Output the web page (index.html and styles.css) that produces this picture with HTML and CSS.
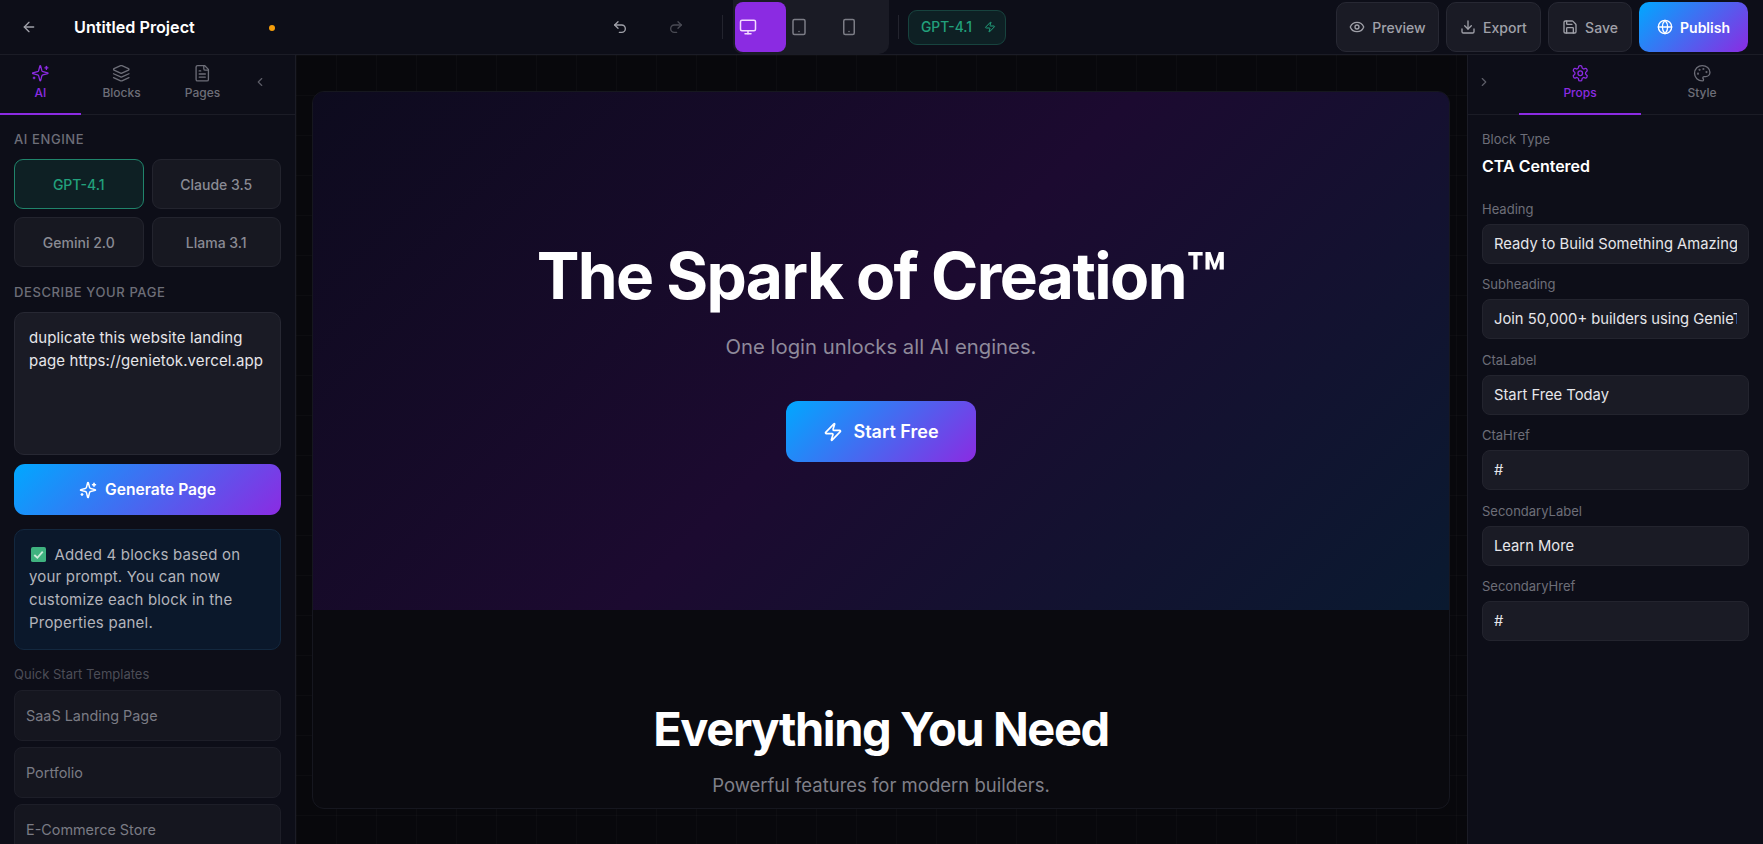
FILE: index.html
```html
<!DOCTYPE html>
<html lang="en">
<head>
    <meta charset="UTF-8">
    <title>Untitled Project</title>
    <link rel="stylesheet" href="styles.css">
</head>
<body>
    <!-- Top bar -->
    <header class="topbar">
        <div class="topbar-left">
            <button class="back-btn">
                <svg class="icon" viewBox="0 0 24 24"><path d="m12 19-7-7 7-7"/><path d="M19 12H5"/></svg>
            </button>
            <span class="project-name">Untitled Project</span>
            <span class="unsaved-dot"></span>
        </div>
        <div class="topbar-center">
            <button class="history-btn">
                <svg class="icon" viewBox="0 0 24 24"><path d="M9 14 4 9l5-5"/><path d="M4 9h10.5a5.5 5.5 0 0 1 5.5 5.5a5.5 5.5 0 0 1-5.5 5.5H11"/></svg>
            </button>
            <button class="history-btn disabled">
                <svg class="icon" viewBox="0 0 24 24"><path d="m15 14 5-5-5-5"/><path d="M20 9H9.5A5.5 5.5 0 0 0 4 14.5A5.5 5.5 0 0 0 9.5 20H13"/></svg>
            </button>
            <span class="divider"></span>
            <div class="device-group">
                <button class="device-btn active">
                    <svg class="icon" viewBox="0 0 24 24"><rect x="2" y="3" width="20" height="14" rx="2"/><path d="M8 21h8"/><path d="M12 17v4"/></svg>
                </button>
                <button class="device-btn">
                    <svg class="icon" viewBox="0 0 24 24"><rect x="4" y="2" width="16" height="20" rx="2"/><path d="M12 18h.01"/></svg>
                </button>
                <button class="device-btn">
                    <svg class="icon" viewBox="0 0 24 24"><rect x="5" y="2" width="14" height="20" rx="2"/><path d="M12 18h.01"/></svg>
                </button>
            </div>
            <span class="divider"></span>
            <div class="engine-chip">
                <span>GPT-4.1</span>
                <svg class="icon icon-sm" viewBox="0 0 24 24"><path d="M4 14a1 1 0 0 1-.78-1.63l9.9-10.2a.5.5 0 0 1 .86.46l-1.92 6.02A1 1 0 0 0 13 10h7a1 1 0 0 1 .78 1.63l-9.9 10.2a.5.5 0 0 1-.86-.46l1.92-6.02A1 1 0 0 0 11 14z"/></svg>
            </div>
        </div>
        <div class="topbar-right">
            <button class="action-btn preview-btn">
                <svg class="icon" viewBox="0 0 24 24"><path d="M2.062 12.348a1 1 0 0 1 0-.696 10.75 10.75 0 0 1 19.876 0 1 1 0 0 1 0 .696 10.75 10.75 0 0 1-19.876 0"/><circle cx="12" cy="12" r="3"/></svg>
                Preview
            </button>
            <button class="action-btn export-btn">
                <svg class="icon" viewBox="0 0 24 24"><path d="M21 15v4a2 2 0 0 1-2 2H5a2 2 0 0 1-2-2v-4"/><path d="m7 10 5 5 5-5"/><path d="M12 15V3"/></svg>
                Export
            </button>
            <button class="action-btn save-btn">
                <svg class="icon" viewBox="0 0 24 24"><path d="M15.2 3a2 2 0 0 1 1.4.6l3.8 3.8a2 2 0 0 1 .6 1.4V19a2 2 0 0 1-2 2H5a2 2 0 0 1-2-2V5a2 2 0 0 1 2-2z"/><path d="M17 21v-7a1 1 0 0 0-1-1H8a1 1 0 0 0-1 1v7"/><path d="M7 3v4a1 1 0 0 0 1 1h7"/></svg>
                Save
            </button>
            <button class="action-btn publish-btn">
                <svg class="icon" viewBox="0 0 24 24"><circle cx="12" cy="12" r="10"/><path d="M12 2a14.5 14.5 0 0 0 0 20 14.5 14.5 0 0 0 0-20"/><path d="M2 12h20"/></svg>
                Publish
            </button>
        </div>
    </header>

    <div class="workspace">
        <!-- Left panel -->
        <aside class="panel panel-left">
            <div class="tabs">
                <div class="tab active">
                    <svg class="icon tab-icon" viewBox="0 0 24 24"><path d="M9.937 15.5A2 2 0 0 0 8.5 14.063l-6.135-1.582a.5.5 0 0 1 0-.962L8.5 9.936A2 2 0 0 0 9.937 8.5l1.582-6.135a.5.5 0 0 1 .963 0L14.063 8.5A2 2 0 0 0 15.5 9.937l6.135 1.581a.5.5 0 0 1 0 .964L15.5 14.063a2 2 0 0 0-1.437 1.437l-1.582 6.135a.5.5 0 0 1-.963 0z"/><path d="M20 3v4"/><path d="M22 5h-4"/><path d="M4 17v2"/><path d="M5 18H3"/></svg>
                    <span>AI</span>
                </div>
                <div class="tab">
                    <svg class="icon tab-icon" viewBox="0 0 24 24"><path d="m12.83 2.18a2 2 0 0 0-1.66 0L2.6 6.08a1 1 0 0 0 0 1.83l8.58 3.91a2 2 0 0 0 1.66 0l8.58-3.9a1 1 0 0 0 0-1.83Z"/><path d="m22 17.65-9.17 4.16a2 2 0 0 1-1.66 0L2 17.65"/><path d="m22 12.65-9.17 4.16a2 2 0 0 1-1.66 0L2 12.65"/></svg>
                    <span>Blocks</span>
                </div>
                <div class="tab">
                    <svg class="icon tab-icon" viewBox="0 0 24 24"><path d="M15 2H6a2 2 0 0 0-2 2v16a2 2 0 0 0 2 2h12a2 2 0 0 0 2-2V7Z"/><path d="M14 2v4a2 2 0 0 0 2 2h4"/><path d="M10 9H8"/><path d="M16 13H8"/><path d="M16 17H8"/></svg>
                    <span>Pages</span>
                </div>
                <div class="collapse-btn collapse-left">
                    <svg class="icon icon-sm" viewBox="0 0 24 24"><path d="m15 18-6-6 6-6"/></svg>
                </div>
            </div>

            <div class="panel-body">
                <div class="section-label">AI ENGINE</div>
                <div class="engine-grid">
                    <button class="engine-btn active">GPT-4.1</button>
                    <button class="engine-btn">Claude 3.5</button>
                    <button class="engine-btn">Gemini 2.0</button>
                    <button class="engine-btn">Llama 3.1</button>
                </div>

                <div class="section-label describe-label">DESCRIBE YOUR PAGE</div>
                <textarea class="prompt-box">duplicate this website landing page https://genietok.vercel.app</textarea>

                <button class="generate-btn">
                    <svg class="icon" viewBox="0 0 24 24"><path d="M9.937 15.5A2 2 0 0 0 8.5 14.063l-6.135-1.582a.5.5 0 0 1 0-.962L8.5 9.936A2 2 0 0 0 9.937 8.5l1.582-6.135a.5.5 0 0 1 .963 0L14.063 8.5A2 2 0 0 0 15.5 9.937l6.135 1.581a.5.5 0 0 1 0 .964L15.5 14.063a2 2 0 0 0-1.437 1.437l-1.582 6.135a.5.5 0 0 1-.963 0z"/><path d="M20 3v4"/><path d="M22 5h-4"/><path d="M4 17v2"/><path d="M5 18H3"/></svg>
                    Generate Page
                </button>

                <div class="ai-message">
                    <svg class="check-mark" viewBox="0 0 16 16"><rect width="16" height="16" rx="2"/><path d="M3.5 8.5 6.8 11.5 12.5 5"/></svg>
                    Added 4 blocks based on your prompt. You can now customize each block in the Properties panel.
                </div>

                <div class="templates-label">Quick Start Templates</div>
                <div class="template-list">
                    <div class="template">SaaS Landing Page</div>
                    <div class="template">Portfolio</div>
                    <div class="template">E-Commerce Store</div>
                </div>
            </div>
        </aside>

        <!-- Canvas -->
        <main class="canvas">
            <div class="page-frame">
                <section class="hero">
                    <h1>The Spark of Creation™</h1>
                    <p>One login unlocks all AI engines.</p>
                    <button class="hero-btn">
                        <svg class="icon" viewBox="0 0 24 24"><path d="M4 14a1 1 0 0 1-.78-1.63l9.9-10.2a.5.5 0 0 1 .86.46l-1.92 6.02A1 1 0 0 0 13 10h7a1 1 0 0 1 .78 1.63l-9.9 10.2a.5.5 0 0 1-.86-.46l1.92-6.02A1 1 0 0 0 11 14z"/></svg>
                        Start Free
                    </button>
                </section>
                <section class="features">
                    <h2>Everything You Need</h2>
                    <p>Powerful features for modern builders.</p>
                </section>
            </div>
        </main>

        <!-- Right panel -->
        <aside class="panel panel-right">
            <div class="tabs">
                <div class="collapse-btn collapse-right">
                    <svg class="icon icon-sm" viewBox="0 0 24 24"><path d="m9 18 6-6-6-6"/></svg>
                </div>
                <div class="tab active">
                    <svg class="icon tab-icon" viewBox="0 0 24 24"><path d="M12.22 2h-.44a2 2 0 0 0-2 2v.18a2 2 0 0 1-1 1.73l-.43.25a2 2 0 0 1-2 0l-.15-.08a2 2 0 0 0-2.73.73l-.22.38a2 2 0 0 0 .73 2.73l.15.1a2 2 0 0 1 1 1.72v.51a2 2 0 0 1-1 1.74l-.15.09a2 2 0 0 0-.73 2.73l.22.38a2 2 0 0 0 2.73.73l.15-.08a2 2 0 0 1 2 0l.43.25a2 2 0 0 1 1 1.73V20a2 2 0 0 0 2 2h.44a2 2 0 0 0 2-2v-.18a2 2 0 0 1 1-1.73l.43-.25a2 2 0 0 1 2 0l.15.08a2 2 0 0 0 2.73-.73l.22-.39a2 2 0 0 0-.73-2.73l-.15-.08a2 2 0 0 1-1-1.74v-.5a2 2 0 0 1 1-1.74l.15-.09a2 2 0 0 0 .73-2.73l-.22-.38a2 2 0 0 0-2.73-.73l-.15.08a2 2 0 0 1-2 0l-.43-.25a2 2 0 0 1-1-1.73V4a2 2 0 0 0-2-2z"/><circle cx="12" cy="12" r="3"/></svg>
                    <span>Props</span>
                </div>
                <div class="tab">
                    <svg class="icon tab-icon" viewBox="0 0 24 24"><path d="M12 2C6.5 2 2 6.5 2 12s4.5 10 10 10c.926 0 1.648-.746 1.648-1.688 0-.437-.18-.835-.437-1.125-.29-.289-.438-.652-.438-1.125a1.64 1.64 0 0 1 1.668-1.668h1.996c3.051 0 5.555-2.503 5.555-5.554C21.965 6.012 17.461 2 12 2z"/><circle cx="13.5" cy="6.5" r=".5"/><circle cx="17.5" cy="10.5" r=".5"/><circle cx="8.5" cy="7.5" r=".5"/><circle cx="6.5" cy="12.5" r=".5"/></svg>
                    <span>Style</span>
                </div>
            </div>

            <div class="panel-body">
                <div class="field-label">Block Type</div>
                <div class="block-type">CTA Centered</div>

                <div class="field">
                    <label class="field-label">Heading</label>
                    <input class="field-input" value="Ready to Build Something Amazing?">
                </div>
                <div class="field">
                    <label class="field-label">Subheading</label>
                    <input class="field-input" value="Join 50,000+ builders using GenieTok">
                </div>
                <div class="field">
                    <label class="field-label">CtaLabel</label>
                    <input class="field-input" value="Start Free Today">
                </div>
                <div class="field">
                    <label class="field-label">CtaHref</label>
                    <input class="field-input" value="#">
                </div>
                <div class="field">
                    <label class="field-label">SecondaryLabel</label>
                    <input class="field-input" value="Learn More">
                </div>
                <div class="field">
                    <label class="field-label">SecondaryHref</label>
                    <input class="field-input" value="#">
                </div>
            </div>
        </aside>
    </div>
</body>
</html>
```

FILE: styles.css
```css
* {
    box-sizing: border-box;
}

body {
    margin: 0;
    height: 100vh;
    overflow: hidden;
    display: flex;
    flex-direction: column;
    font-family: 'Inter', 'Liberation Sans', sans-serif;
    background: #08080c;
    color: #fff;
}

button {
    font-family: inherit;
    border: none;
    background: none;
    color: inherit;
    padding: 0;
}

.icon {
    width: 16px;
    height: 16px;
    flex-shrink: 0;
    fill: none;
    stroke: currentColor;
    stroke-width: 2;
    stroke-linecap: round;
    stroke-linejoin: round;
}

.icon-sm {
    width: 14px;
    height: 14px;
}

/* Top bar */
.topbar {
    height: 55px;
    flex-shrink: 0;
    display: flex;
    align-items: center;
    background: #0d0e18;
    border-bottom: 1px solid #1b1c26;
    padding-right: 15px;
}

.topbar-left {
    width: 592px;
    display: flex;
    align-items: center;
    padding-left: 21px;
}

.back-btn {
    display: flex;
    color: #a0a1a9;
}

.project-name {
    margin-left: 37px;
    font-size: 16.2px;
    font-weight: 600;
}

.unsaved-dot {
    width: 6px;
    height: 6px;
    margin-left: 74px;
    margin-top: 2px;
    border-radius: 50%;
    background: #f59e0b;
}

.topbar-center {
    display: flex;
    align-items: center;
    height: 54px;
}

.history-btn {
    width: 56px;
    height: 36px;
    display: flex;
    align-items: center;
    justify-content: center;
    color: #a0a1a9;
}

.history-btn.disabled {
    color: #4a4b54;
}

.divider {
    width: 1px;
    height: 24px;
    background: #23242e;
    margin: 0 10px 0 18px;
}

.device-group {
    width: 156px;
    height: 54px;
    display: flex;
    align-items: center;
    padding-left: 2px;
    background: #1a1b25;
    border-radius: 0 0 10px 10px;
}

.device-group + .divider {
    margin: 0 9px;
}

.device-btn {
    width: 50.5px;
    height: 50px;
    display: flex;
    align-items: center;
    padding-left: 4px;
    border-radius: 8px;
    color: #7c7d86;
}

.device-btn .icon {
    width: 18px;
    height: 18px;
}

.device-btn.active {
    background: #8b2be2;
    color: #f3dcff;
}

.engine-chip {
    width: 98px;
    height: 35px;
    display: flex;
    align-items: center;
    gap: 12px;
    padding-left: 12px;
    border: 1px solid #17433e;
    border-radius: 9px;
    background: #0e2024;
    color: #22a07c;
    font-size: 13.8px;
    font-weight: 500;
}

.engine-chip .icon {
    width: 12px;
    height: 12px;
}

.topbar-right {
    margin-left: auto;
    display: flex;
    align-items: center;
    gap: 7px;
}

.action-btn {
    height: 50px;
    display: flex;
    align-items: center;
    justify-content: center;
    gap: 7px;
    border: 1px solid #272833;
    border-radius: 10px;
    background: #1a1b25;
    color: #a0a1a9;
    font-size: 14px;
    font-weight: 500;
}

.preview-btn {
    width: 103px;
}

.export-btn {
    width: 95px;
}

.save-btn {
    width: 84px;
}

.publish-btn {
    width: 109px;
    border: none;
    color: #fff;
    font-weight: 600;
    background: linear-gradient(135deg, #00a8ff, #8b2be2);
}

/* Layout */
.workspace {
    flex: 1;
    min-height: 0;
    display: flex;
}

.panel {
    width: 296px;
    flex-shrink: 0;
    overflow: hidden;
    background: #0d0e18;
}

.panel-left {
    border-right: 1px solid #1b1c26;
}

.panel-right {
    border-left: 1px solid #1b1c26;
}

.tabs {
    height: 60px;
    display: flex;
    border-bottom: 1px solid #1b1c26;
}

.tab {
    width: 81px;
    display: flex;
    flex-direction: column;
    align-items: center;
    padding-top: 9px;
    gap: 2.5px;
    font-size: 12px;
    font-weight: 500;
    color: #6d6e78;
    border-bottom: 2px solid transparent;
    margin-bottom: -1px;
}

.tab.active {
    color: #8b2be2;
    border-bottom-color: #8b2be2;
}

.tab-icon {
    width: 18.5px;
    height: 18.5px;
    stroke-width: 1.7;
}

.panel-right .tab {
    width: 122px;
}

.collapse-btn {
    display: flex;
    align-items: center;
    color: #5c5d67;
    padding-bottom: 6px;
}

.collapse-left {
    padding-left: 10px;
}

.collapse-right {
    width: 51px;
    padding-left: 9px;
}

.panel-body {
    padding: 14px 14px 0;
}

.section-label {
    font-size: 13px;
    font-weight: 500;
    line-height: 20px;
    letter-spacing: 0.6px;
    color: #6d6e78;
}

.engine-grid {
    display: grid;
    grid-template-columns: repeat(2, 1fr);
    gap: 8px;
    margin-top: 10px;
}

.engine-btn {
    height: 50px;
    border: 1px solid #23242e;
    border-radius: 9px;
    background: #171821;
    color: #8a8b94;
    font-size: 14px;
    font-weight: 500;
}

.engine-btn.active {
    border-color: #20846b;
    background: #0e2024;
    color: #22a07c;
}

.describe-label {
    margin-top: 15px;
}

.prompt-box {
    display: block;
    width: 100%;
    height: 143px;
    margin-top: 10px;
    padding: 14px;
    resize: none;
    outline: none;
    border: 1px solid #272833;
    border-radius: 10px;
    background: #1a1b25;
    color: #e6e6ea;
    font-family: inherit;
    font-size: 15px;
    letter-spacing: 0.12px;
    line-height: 22.5px;
}

.generate-btn {
    width: 100%;
    height: 51px;
    margin-top: 9px;
    display: flex;
    align-items: center;
    justify-content: center;
    gap: 8px;
    border-radius: 11px;
    background: linear-gradient(135deg, #00a8ff, #8b2be2);
    font-size: 15.6px;
    font-weight: 600;
}

.generate-btn .icon {
    width: 18px;
    height: 18px;
}

.ai-message {
    height: 121px;
    margin-top: 13.5px;
    padding: 14px;
    border: 1px solid #13283f;
    border-radius: 10px;
    background: #0b182b;
    color: #b3b4bb;
    font-size: 15px;
    letter-spacing: 0.2px;
    line-height: 22.7px;
}

.check-mark {
    width: 15px;
    height: 15px;
    margin: 0 4px 0 2px;
    vertical-align: -2px;
}

.check-mark rect {
    fill: #3fb27f;
}

.check-mark path {
    fill: none;
    stroke: #cdebd9;
    stroke-width: 2;
}

.templates-label {
    margin-top: 15px;
    font-size: 13px;
    line-height: 18px;
    color: #4c4d57;
}

.template-list {
    display: flex;
    flex-direction: column;
    gap: 5.5px;
    margin-top: 7px;
}

.template {
    height: 51.5px;
    flex-shrink: 0;
    display: flex;
    align-items: center;
    padding-left: 11px;
    border: 1px solid #1d1e28;
    border-radius: 8px;
    background: #15161f;
    color: #7a7b84;
    font-size: 14.4px;
}

/* Canvas */
.canvas {
    flex: 1;
    min-width: 0;
    padding: 36px 17px 35px 16px;
    background-color: #08080c;
    background-image:
        linear-gradient(rgba(255, 255, 255, 0.018) 1px, transparent 1px),
        linear-gradient(90deg, rgba(255, 255, 255, 0.018) 1px, transparent 1px);
    background-size: 40px 40px;
}

.page-frame {
    height: 100%;
    overflow: hidden;
    border: 1px solid #16171f;
    border-radius: 12px;
    background: #0a0a0f;
}

.hero {
    height: 518px;
    display: flex;
    flex-direction: column;
    align-items: center;
    justify-content: center;
    padding-bottom: 4px;
    background: linear-gradient(135deg, #0d0b1e 0%, #1c0a30 50%, #0a1a30 100%);
}

.hero h1 {
    margin: 0;
    font-size: 64px;
    font-weight: 700;
    line-height: 79px;
    letter-spacing: -1.6px;
}

.hero p {
    margin: 17px 0 39px;
    font-size: 20.3px;
    line-height: 30px;
    color: #8f8a9b;
}

.hero-btn {
    width: 190px;
    height: 61px;
    display: flex;
    align-items: center;
    justify-content: center;
    gap: 10px;
    border-radius: 12px;
    background: linear-gradient(135deg, #00a8ff, #8b2be2);
    font-size: 18px;
    font-weight: 600;
}

.hero-btn .icon {
    width: 20px;
    height: 20px;
}

.features {
    padding-top: 92px;
    text-align: center;
}

.features h2 {
    margin: 0;
    font-size: 47px;
    font-weight: 700;
    line-height: 53px;
    letter-spacing: -1.4px;
}

.features p {
    margin: 17px 0 0;
    font-size: 18.5px;
    line-height: 27px;
    color: #808089;
}

/* Properties */
.field-label {
    display: block;
    font-size: 13px;
    line-height: 20px;
    color: #6d6e78;
}

.block-type {
    margin-top: 7px;
    font-size: 16px;
    font-weight: 600;
    line-height: 20px;
}

.block-type + .field {
    margin-top: 23px;
}

.field + .field {
    margin-top: 10.4px;
}

.field-input {
    display: block;
    width: 100%;
    height: 40px;
    margin-top: 5px;
    padding: 0 11px;
    outline: none;
    border: 1px solid #23242e;
    border-radius: 8px;
    background: #1a1b25;
    color: #e6e6ea;
    font-family: inherit;
    font-size: 14.75px;
}
```
